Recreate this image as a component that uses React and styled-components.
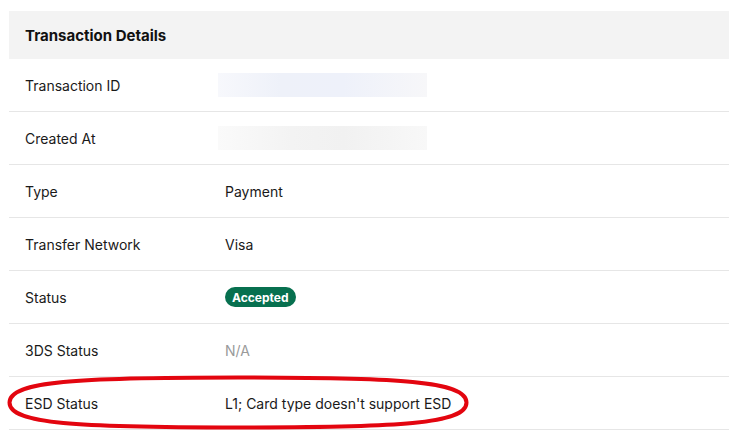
import React from 'react'
import styled, { createGlobalStyle } from 'styled-components'

const GlobalStyle = createGlobalStyle`
  body {
    margin: 0;
    background: #ffffff;
    font-family: Inter, "Noto Sans", "Liberation Sans", sans-serif;
    color: #111111;
  }
`

const rows = [
  { label: 'Transaction ID', kind: 'skeleton', tint: 'blue' },
  { label: 'Created At', kind: 'skeleton', tint: 'grey' },
  { label: 'Type', value: 'Payment' },
  { label: 'Transfer Network', value: 'Visa' },
  { label: 'Status', kind: 'badge', value: 'Accepted' },
  { label: '3DS Status', value: 'N/A', muted: true },
  { label: 'ESD Status', value: "L1; Card type doesn't support ESD", circled: true },
]

function App() {
  return (
    <>
      <GlobalStyle />
      <Page>
        <Card>
          <Header>Transaction Details</Header>
          {rows.map((r) => (
            <Row key={r.label}>
              <Label>{r.label}</Label>
              <ValueCell>
                {r.kind === 'skeleton' && <Skeleton $tint={r.tint} />}
                {r.kind === 'badge' && <Badge>{r.value}</Badge>}
                {!r.kind && <Value $muted={r.muted}>{r.value}</Value>}
              </ValueCell>
              {r.circled && (
                <Circle viewBox="0 0 462 55">
                  <path
                    d="M 2.5 27.5 C 2.5 6, 70 2.5, 231 2.5 C 392 2.5, 459.5 6, 459.5 27.5 C 459.5 49, 392 52.5, 231 52.5 C 70 52.5, 2.5 49, 2.5 27.5 Z"
                    fill="none"
                    stroke="#e3050f"
                    strokeWidth="4"
                  />
                </Circle>
              )}
            </Row>
          ))}
        </Card>
      </Page>
    </>
  )
}

export default App

const Page = styled.div`
  padding: 11px 13px 0 9px;
`

const Card = styled.div`
  width: 720px;
  display: flex;
  flex-direction: column;
`

const Header = styled.div`
  height: 48px;
  background: #f3f3f3;
  display: flex;
  align-items: center;
  padding-left: 16px;
  font-size: 15px;
  font-weight: 650;
  color: #111;
`

const Row = styled.div`
  position: relative;
  height: 52px;
  display: flex;
  align-items: center;
  border-bottom: 1px solid #e6e6e6;
`

const Label = styled.div`
  width: 192px;
  padding-left: 16px;
  font-size: 14px;
  color: #1a1a1a;
`

const ValueCell = styled.div`
  flex: 1;
  display: flex;
  align-items: center;
`

const Value = styled.span`
  padding-left: 8px;
  font-size: 14px;
  color: ${(p) => (p.$muted ? '#9a9a9a' : '#1a1a1a')};
`

const Skeleton = styled.div`
  width: 209px;
  height: 24px;
  margin-left: 1px;
  background: ${(p) =>
    p.$tint === 'blue'
      ? 'linear-gradient(90deg, #f7f8fc 0%, #eef1f9 30%, #eef1fa 60%, #f7f7f9 100%)'
      : 'linear-gradient(90deg, #fafafa 0%, #f3f3f3 35%, #f1f1f1 60%, #f8f8f8 100%)'};
`

const Badge = styled.span`
  margin-left: 8px;
  height: 20px;
  padding: 0 7px;
  display: inline-flex;
  align-items: center;
  border-radius: 10px;
  background: #07704f;
  color: #ffffff;
  font-size: 12px;
  font-weight: 700;
`

const Circle = styled.svg`
  position: absolute;
  left: -2px;
  top: -2px;
  width: 462px;
  height: 55px;
  pointer-events: none;
`
